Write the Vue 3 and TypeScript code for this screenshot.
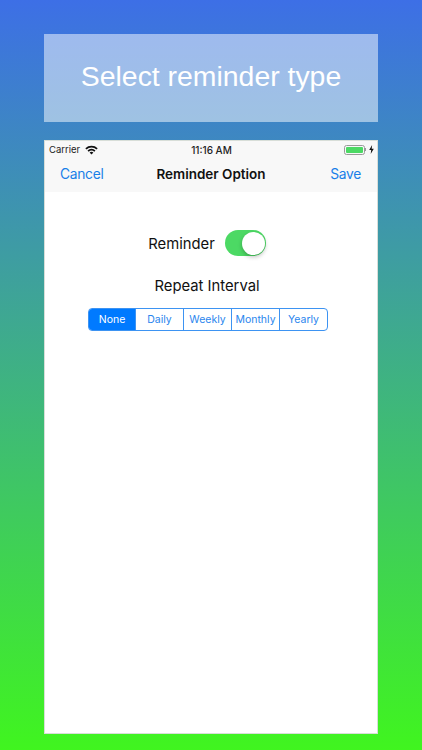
<script setup lang="ts">
const segments: string[] = ['None', 'Daily', 'Weekly', 'Monthly', 'Yearly']
</script>

<template>
  <div class="page">
    <div class="banner">Select reminder type</div>
    <div class="phone">
      <div class="bars">
        <div class="status">
          <div class="status-left">
            <span>Carrier</span>
            <svg class="wifi" width="13" height="10" viewBox="0 0 13 10">
              <path d="M0.3 3.2A9 9 0 0 1 12.7 3.2L11.5 4.5A7.2 7.2 0 0 0 1.5 4.5Z" fill="#111" />
              <path d="M2.5 5.4A5.9 5.9 0 0 1 10.5 5.4L9.3 6.7A4.2 4.2 0 0 0 3.7 6.7Z" fill="#111" />
              <path d="M4.6 7.5A2.9 2.9 0 0 1 8.4 7.5L6.5 9.6Z" fill="#111" />
            </svg>
          </div>
          <span class="time">11:16 AM</span>
          <div class="status-right">
            <div class="battery"><div class="battery-fill"></div></div>
            <div class="battery-cap"></div>
            <svg class="bolt" width="5" height="9" viewBox="0 0 5 9">
              <path d="M3.1 0L0.2 5H2.2L1.7 9L4.8 3.7H2.7Z" fill="#111" />
            </svg>
          </div>
        </div>
        <div class="nav">
          <span class="nav-btn">Cancel</span>
          <span class="nav-title">Reminder Option</span>
          <span class="nav-btn nav-right">Save</span>
        </div>
      </div>
      <div class="content">
        <div class="reminder">
          <span class="reminder-label">Reminder</span>
          <div class="switch"><div class="knob"></div></div>
        </div>
        <div class="repeat">Repeat Interval</div>
        <div class="segments">
          <div
            v-for="(s, i) in segments"
            :key="s"
            class="segment"
            :class="{ active: i === 0 }"
          >{{ s }}</div>
        </div>
      </div>
    </div>
  </div>
</template>

<style>
html, body { margin: 0; padding: 0; }
</style>

<style scoped>
.page {
  width: 422px;
  height: 750px;
  box-sizing: border-box;
  padding: 34px 44px 16px;
  background: linear-gradient(180deg, #3d6fe6 0%, #40f51f 100%);
  display: flex;
  flex-direction: column;
  gap: 18px;
  overflow: hidden;
  font-family: "Inter", "Liberation Sans", sans-serif;
}
.banner {
  height: 88px;
  flex: none;
  display: flex;
  align-items: center;
  justify-content: center;
  background: rgba(255, 255, 255, 0.5);
  color: #fff;
  font-family: "Liberation Sans", Arial, sans-serif;
  font-size: 28.4px;
  padding-bottom: 3px;
  box-sizing: border-box;
}
.phone {
  flex: 1;
  background: #fff;
  box-shadow: inset 0 0 0 1px rgba(190, 200, 190, 0.6);
  display: flex;
  flex-direction: column;
  min-height: 0;
}
.bars { background: #f8f8f8; margin: 1px 1px 0; }
.status {
  height: 17px;
  display: grid;
  grid-template-columns: 1fr auto 1fr;
  align-items: center;
  padding: 0 3px 0 4px;
  font-size: 9.5px;
  color: #222;
}
.status-left { display: flex; align-items: center; gap: 5px; }
.time { font-weight: 500; font-size: 10px; }
.status-right { display: flex; align-items: center; justify-content: flex-end; }
.battery {
  width: 17px;
  height: 6px;
  border: 1px solid #9a9a9a;
  border-radius: 2.5px;
  padding: 1px;
  box-sizing: content-box;
  display: flex;
}
.battery-fill { flex: 1; background: #4cd964; border-radius: 1px; }
.battery-cap { width: 1px; height: 3px; background: #9a9a9a; margin-right: 3px; }
.nav {
  height: 34px;
  display: grid;
  grid-template-columns: 1fr auto 1fr;
  align-items: center;
  padding: 0 15px;
  box-sizing: border-box;
  padding-bottom: 2px;
}
.nav-btn { color: #1a7fe8; font-size: 13.8px; letter-spacing: -0.3px; }
.nav-right { text-align: right; padding-right: 1px; }
.nav-title { font-weight: 600; font-size: 13.5px; color: #111; letter-spacing: -0.02px; }
.content {
  flex: 1;
  display: flex;
  flex-direction: column;
  align-items: center;
  padding-top: 38px;
  color: #111;
  font-size: 14.8px;
}
.reminder {
  display: flex;
  align-items: center;
  gap: 10px;
  height: 26px;
  margin-left: -8px;
}
.reminder-label { padding-top: 1px; }
.switch {
  width: 41px;
  height: 26px;
  border-radius: 13px;
  background: #4cd964;
  position: relative;
}
.knob {
  position: absolute;
  right: 1px;
  top: 1.5px;
  width: 23px;
  height: 23px;
  border-radius: 50%;
  background: #fff;
  box-shadow: 0 2px 4px rgba(0, 0, 0, 0.25);
}
.repeat {
  margin-top: 20px;
  height: 20px;
  line-height: 20px;
  margin-left: -8px;
}
.segments {
  margin-top: 12px;
  margin-left: -6px;
  width: 240px;
  height: 23px;
  box-sizing: border-box;
  display: grid;
  grid-template-columns: 46px 48px 48px 48px 1fr;
  border: 1px solid #3d93f2;
  border-radius: 4px;
  overflow: hidden;
}
.segment {
  display: flex;
  align-items: center;
  justify-content: center;
  color: #2a86ee;
  font-size: 10.5px;
  border-left: 1px solid #3d93f2;
  white-space: nowrap;
}
.segment:first-child { border-left: none; }
.segment.active { background: #007aff; color: #fff; }
</style>
